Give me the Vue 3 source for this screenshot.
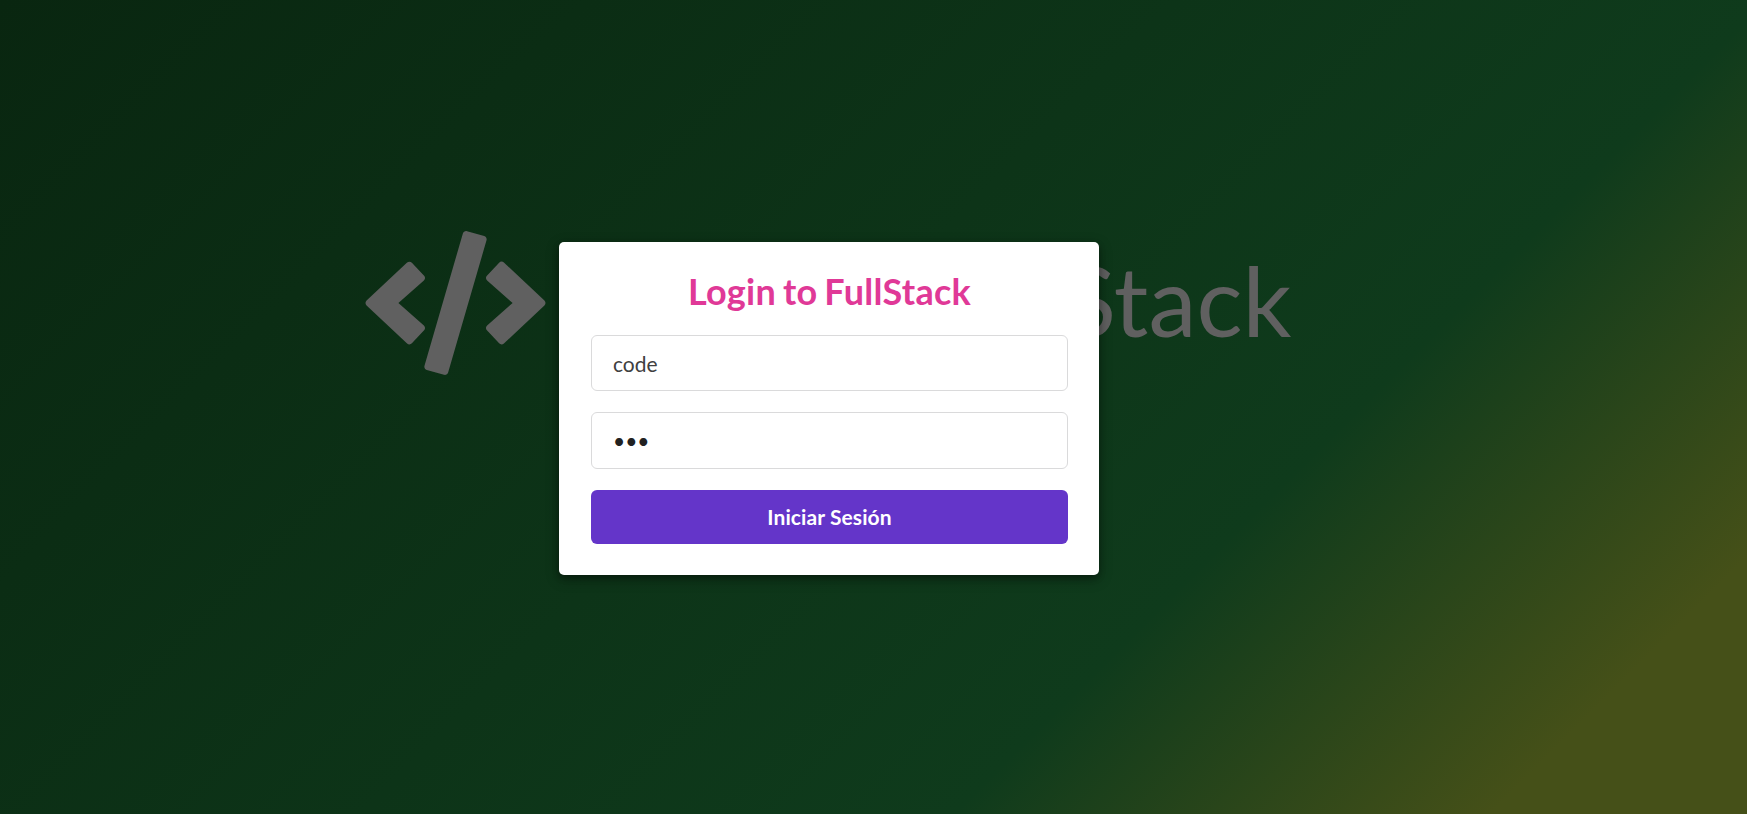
<script setup>
import { ref } from 'vue'

const user = ref('code')
const password = ref('abc')
</script>

<template>
  <main class="page">
    <div class="brand" aria-hidden="true">
      <svg class="brand-icon" viewBox="0 0 640 512" fill="currentColor">
        <path d="M278.9 511.5l-61-17.700c-6.400-1.800-10-8.500-8.200-14.900L346.200 8.700c1.800-6.400 8.500-10 14.900-8.200l61 17.700c6.400 1.800 10 8.500 8.200 14.900L293.800 503.300c-1.900 6.400-8.500 10.100-14.900 8.200zm-114-112.200l43.500-46.400c4.600-4.900 4.300-12.700-.8-17.200L117 256l90.600-79.700c5.100-4.500 5.500-12.300.8-17.200l-43.500-46.400c-4.500-4.800-12.100-5.100-17-.5L3.800 247.200c-5.100 4.700-5.100 12.800 0 17.500l144.100 135.100c4.900 4.600 12.500 4.400 17-.5zm327.200.6l144.100-135.100c5.100-4.700 5.100-12.800 0-17.500L492.100 112.100c-4.800-4.500-12.400-4.300-17 .5L431.600 159c-4.600 4.900-4.300 12.700.8 17.200L523 256l-90.600 79.700c-5.100 4.500-5.500 12.300-.8 17.200l43.500 46.400c4.500 4.900 12.100 5.100 17 .6z" />
      </svg>
      <span class="brand-name">Stack</span>
    </div>
    <form class="card" @submit.prevent>
      <h1 class="title">Login to FullStack</h1>
      <input v-model="user" class="field" type="text" aria-label="Usuario" />
      <input v-model="password" class="field password" type="password" aria-label="Contraseña" />
      <button class="submit" type="submit">Iniciar Sesión</button>
    </form>
  </main>
</template>

<style scoped>
.page {
  position: relative;
  box-sizing: border-box;
  height: 100vh;
  overflow: hidden;
  display: flex;
  flex-direction: column;
  align-items: center;
  padding-top: 242px;
  padding-right: 89px;
  font-family: Lato, sans-serif;
  background: linear-gradient(135deg, #092610 0%, #0f3b1c 69%, #455018 90%);
}

.brand {
  position: absolute;
  top: 231px;
  left: 364.5px;
  width: 927px;
  height: 144px;
  display: flex;
  align-items: flex-start;
  justify-content: space-between;
  color: #606060;
}

.brand-icon {
  width: 181px;
  height: 144px;
}

.brand-name {
  margin-top: -3px;
  font-size: 96.5px;
  line-height: 144px;
  white-space: nowrap;
}

.card {
  position: relative;
  box-sizing: border-box;
  width: 540px;
  height: 333px;
  padding: 31px 31px 31px 32px;
  display: flex;
  flex-direction: column;
  border-radius: 5px;
  background: #fff;
  box-shadow: 0 3px 6px rgba(0, 0, 0, 0.28), 0 4px 14px rgba(0, 0, 0, 0.3);
}

.title {
  margin: 0 0 26px;
  font-size: 36px;
  font-weight: 700;
  line-height: 36px;
  text-align: center;
  letter-spacing: 0.25px;
  word-spacing: -2px;
  color: #e03997;
}

.field {
  box-sizing: border-box;
  width: 100%;
  height: 56px;
  margin: 0 0 21px;
  padding: 0 21px;
  border: 1px solid #dadadb;
  border-radius: 6px;
  outline: none;
  font: 400 21px Lato, sans-serif;
  color: #404040;
}

.password {
  height: 57px;
  color: #212121;
}

.submit {
  width: 100%;
  height: 54px;
  padding: 0 0 2px;
  border: 0;
  border-radius: 6px;
  background: #6435c9;
  color: #fff;
  font: 700 21px Lato, sans-serif;
  letter-spacing: 0.1px;
}
</style>

<style>
body {
  margin: 0;
}
</style>
